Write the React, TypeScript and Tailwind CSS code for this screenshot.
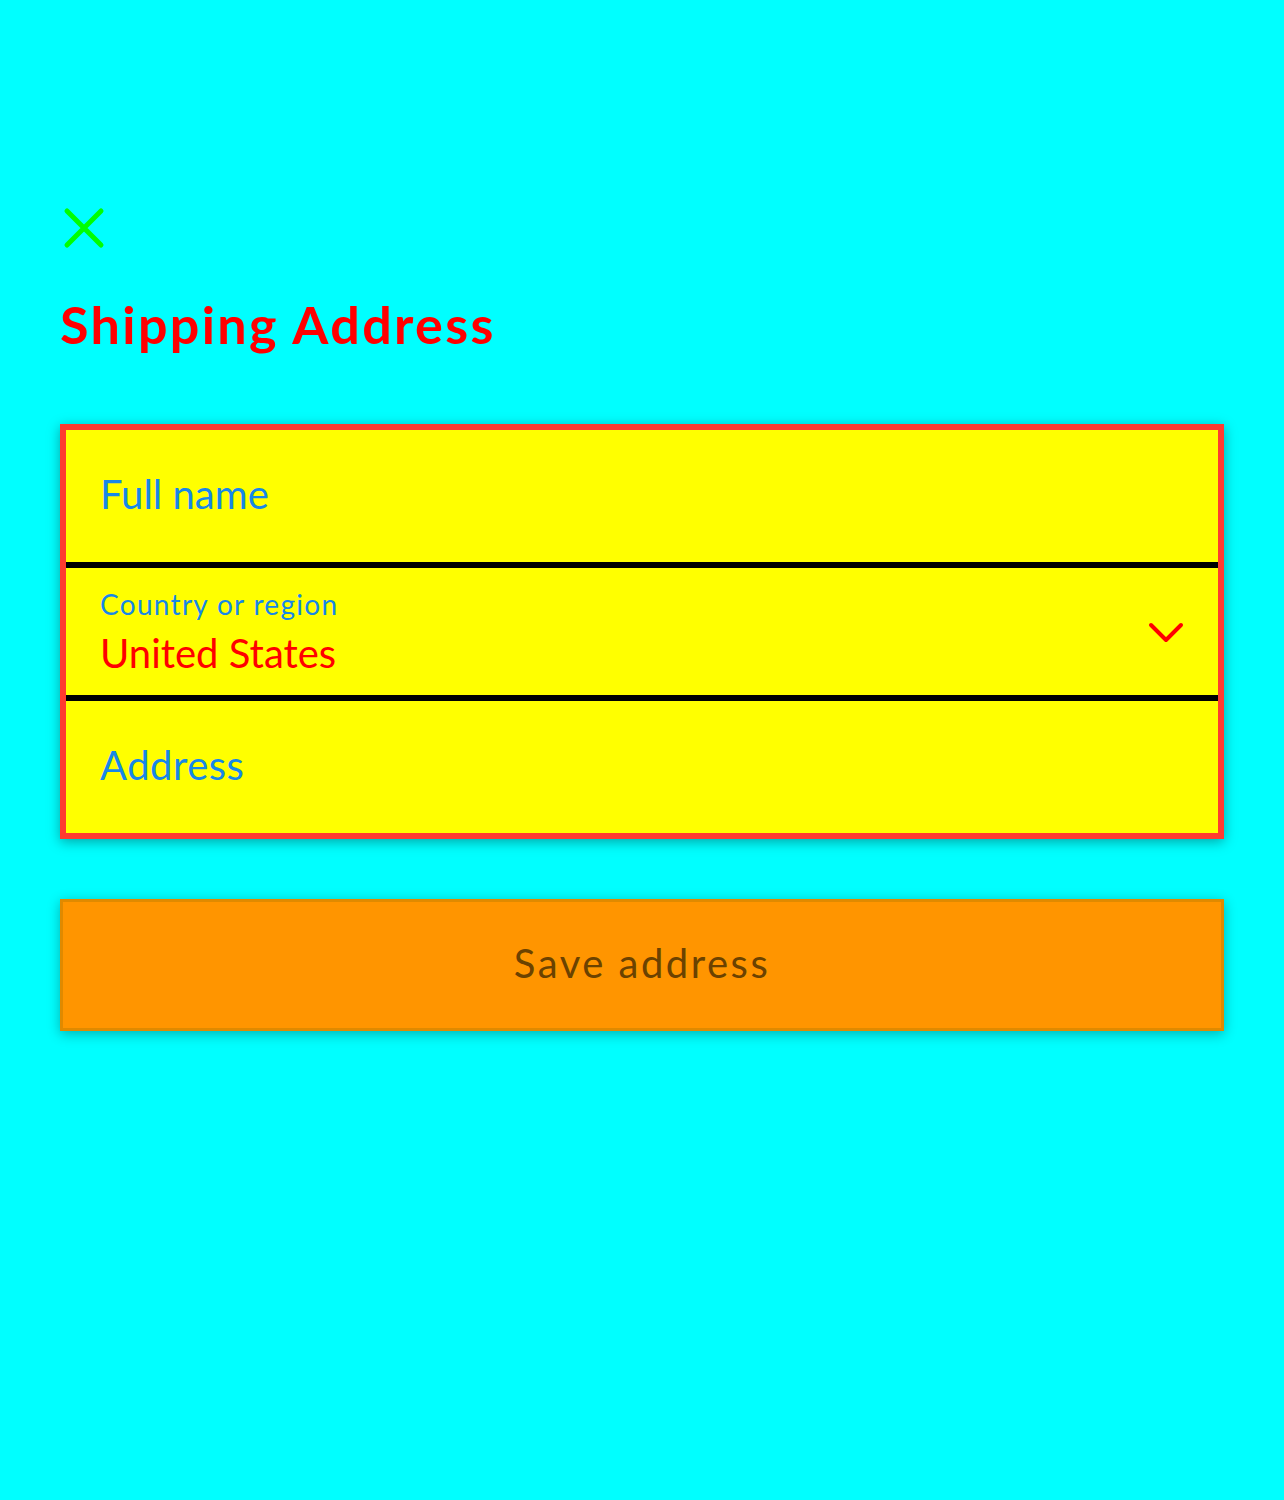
import React from "react";

export default function App() {
  const font = { fontFamily: "Lato, 'Noto Sans', sans-serif" };
  return (
    <div className="min-h-[1500px] bg-[#00ffff] px-[60px] pt-[206px]" style={font}>
      <button className="block ml-[2px] w-[44px] h-[44px]" aria-label="Close">
        <svg width="44" height="44" viewBox="0 0 44 44" fill="none">
          <path d="M5 5 L39 39 M39 5 L5 39" stroke="#00ff00" strokeWidth="5" strokeLinecap="round" />
        </svg>
      </button>
      <h1 className="mt-[42px] text-[52px] leading-[64px] font-bold tracking-[2.4px] text-[#ff0000]">
        Shipping Address
      </h1>
      <div className="mt-[68px] border-[6px] border-[#ff3b30] bg-[#ffff00] shadow-[0_3px_12px_rgba(0,0,0,0.35)]">
        <div className="h-[138px] border-b-[6px] border-black flex items-center pl-[34px] pb-[4px]">
          <span className="text-[40px] leading-none text-[#1787e8]">Full name</span>
        </div>
        <div className="h-[133px] border-b-[6px] border-black flex items-center justify-between pl-[34px] pr-[34px]">
          <div className="flex flex-col">
            <span className="text-[28px] leading-[30px] tracking-[1.3px] text-[#1787e8]">Country or region</span>
            <span className="mt-[12px] text-[40px] leading-[44px] text-[#ff0000]">United States</span>
          </div>
          <svg width="36" height="22" viewBox="0 0 36 22" fill="none" className="mt-[2px]">
            <path d="M3 3 L18 18 L33 3" stroke="#ff0000" strokeWidth="4" strokeLinecap="round" strokeLinejoin="round" />
          </svg>
        </div>
        <div className="h-[132px] flex items-center pl-[34px] pb-[4px]">
          <span className="text-[40px] leading-none tracking-[0.5px] text-[#1787e8]">Address</span>
        </div>
      </div>
      <button className="mt-[60px] w-full h-[132px] border-[3px] border-[#e08a00] bg-[#ff9500] shadow-[0_3px_12px_rgba(0,0,0,0.3)] flex items-center justify-center pb-[5px]">
        <span className="text-[40px] leading-none tracking-[2.5px] text-[#6b4200]">Save address</span>
      </button>
    </div>
  );
}
